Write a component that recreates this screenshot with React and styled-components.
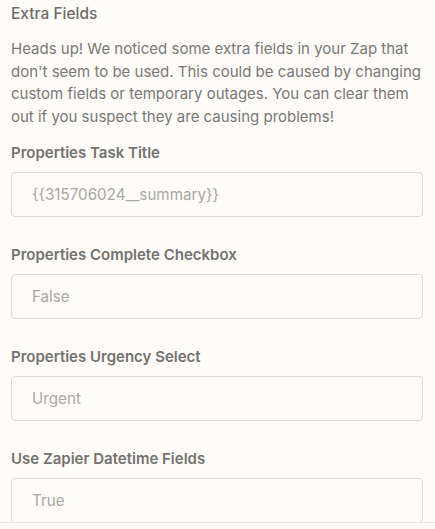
import styled, { createGlobalStyle } from "styled-components"

const GlobalStyle = createGlobalStyle`
    html, body {
        margin: 0;
        padding: 0;
        background: #fdfcf9;
    }
    body {
        font-family: Inter, "Noto Sans", sans-serif;
    }
`

const fields = [
    { label: 'Properties Task Title', value: '{{315706024__summary}}' },
    { label: 'Properties Complete Checkbox', value: 'False' },
    { label: 'Properties Urgency Select', value: 'Urgent' },
    { label: 'Use Zapier Datetime Fields', value: 'True' },
]

export default function App(){
    return(
        <Page>
            <GlobalStyle />
            <Content>
                <Title>Extra Fields</Title>
                <Notice>
                    Heads up! We noticed some extra fields in your Zap that don't seem to be used. This could be caused by changing custom fields or temporary outages. You can clear them out if you suspect they are causing problems!
                </Notice>
                {fields.map((field, index) =>
                    <Field key={index}>
                        <Label>{field.label}</Label>
                        <Input>{field.value}</Input>
                    </Field>
                )}
            </Content>
            <Footer />
        </Page>
    )
}

const Page = styled.div`
    height: 100vh;
    display: flex;
    flex-direction: column;
    overflow: hidden;
`

const Content = styled.div`
    flex: 1;
    min-height: 0;
    overflow: hidden;
    padding: 2px 12px 0 11px;
`

const Title = styled.h2`
    margin: 0;
    font-size: 15.5px;
    line-height: 24px;
    font-weight: 500;
    color: #6e6c69;
`

const Notice = styled.p`
    margin: 12px 0 14px;
    font-size: 15px;
    line-height: 22.6px;
    color: #7a7875;
`

const Field = styled.div`
    display: flex;
    flex-direction: column;
    gap: 8px;
    margin-bottom: 27px;
`

const Label = styled.div`
    font-size: 15px;
    line-height: 22px;
    font-weight: 600;
    color: #74726f;
`

const Input = styled.div`
    height: 45px;
    box-sizing: border-box;
    display: flex;
    align-items: center;
    padding: 0 20px;
    border: 1px solid #dcdad6;
    border-radius: 4px;
    background: #fdfcf9;
    font-size: 15.2px;
    color: #a9a7a4;
`

const Footer = styled.div`
    height: 6px;
    flex-shrink: 0;
    border-top: 1px solid #e6e4e0;
    background: #fdfcfa;
`
